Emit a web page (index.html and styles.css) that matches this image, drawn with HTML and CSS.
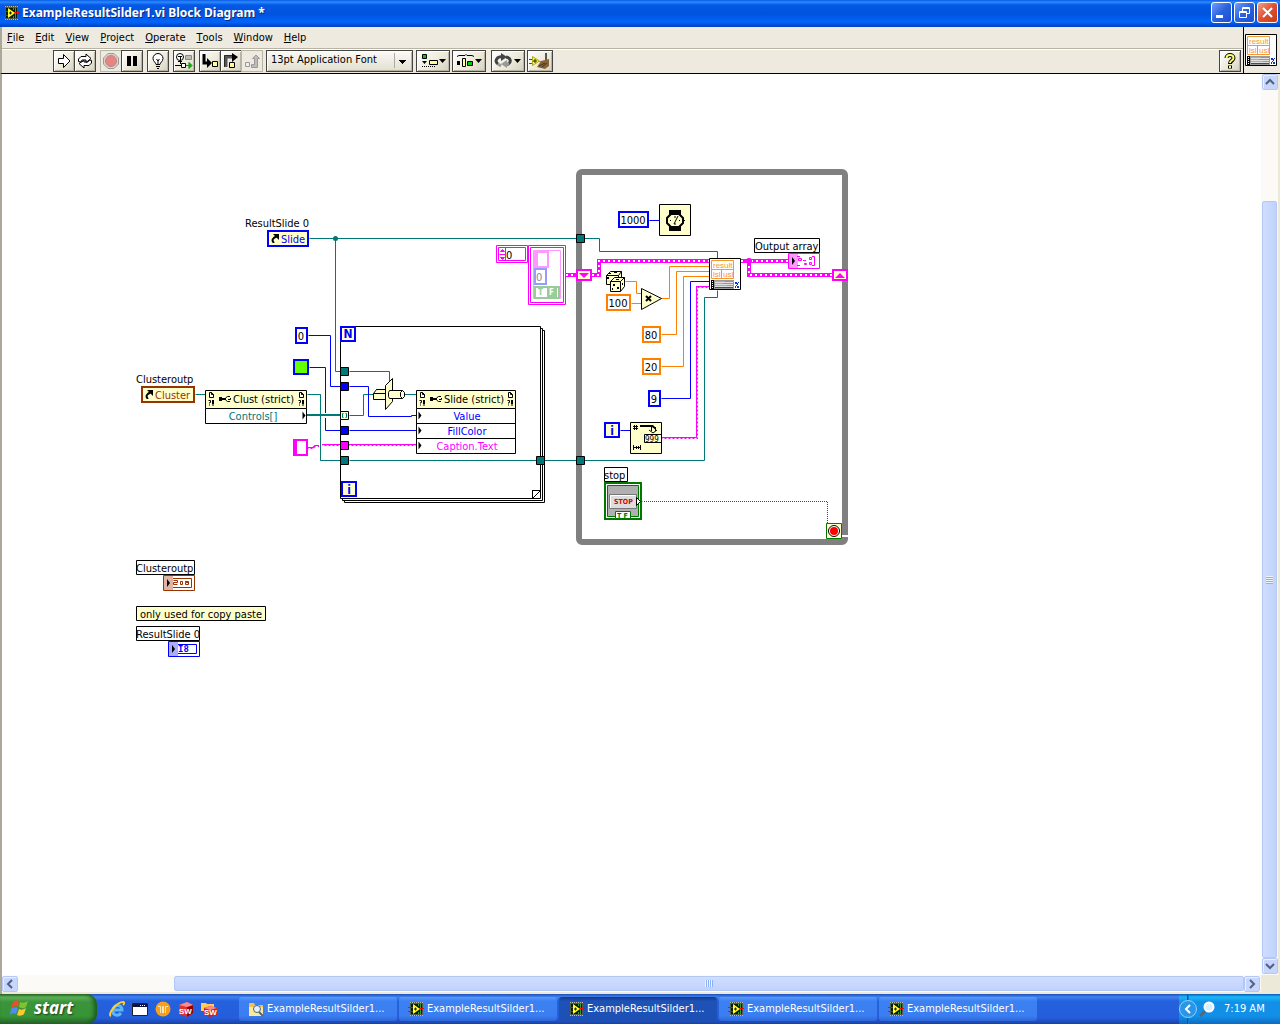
FILE: index.html
```
<!DOCTYPE html>
<html lang="en">
<head>
	<meta charset="utf-8">
	<title>ExampleResultSilder1.vi Block Diagram *</title>
	<link rel="stylesheet" href="styles.css">
</head>
<body>
	<!-- shared icons -->
	<svg class="defs" width="0" height="0" aria-hidden="true">
		<symbol id="lv" viewBox="0 0 16 16">
			<path fill="#555a50" d="M2 1h13v14H2z"/>
			<path fill="#0a1e05" d="M3 3h11v10H3z"/>
			<path stroke="#b8b8a8" stroke-dasharray="1 1" d="M2 1.500h13M2 14.500h13"/>
			<path fill="none" stroke="#2fa02f" d="M12.500 3v10M10.500 3v2M10.500 11v2"/>
			<path stroke="#f00" d="M0 6.500h5M11 7.500h5"/>
			<path stroke="#1440ff" d="M0 10.500h5"/>
			<path fill="#ff2" d="M5 3l7 5-7 5z"/>
			<path stroke="#222" d="M6 8h3M7.500 6.500v3"/>
		</symbol>
		<symbol id="left" viewBox="0 0 10 10"><path fill="none" stroke="#4d6185" stroke-width="2" d="M7 1L3 5l4 4"/></symbol>
		<symbol id="right" viewBox="0 0 10 10"><path fill="none" stroke="#4d6185" stroke-width="2" d="M3 1l4 4-4 4"/></symbol>
		<symbol id="up" viewBox="0 0 10 10"><path fill="none" stroke="#4d6185" stroke-width="2" d="M1 7l4-4 4 4"/></symbol>
		<symbol id="down" viewBox="0 0 10 10"><path fill="none" stroke="#4d6185" stroke-width="2" d="M1 3l4 4 4-4"/></symbol>
		<symbol id="doc" viewBox="0 0 7 15">
			<path fill="#fff" stroke="#000" d="M1.500 1.500h2l2 2v3h-4zM3.500 1.500v2h2"/>
			<path fill="none" stroke="#000" d="M.5 9.500h2v2h-1v1M1 14h1M4.500 9v4M4 14h2M5.500 9v4"/>
		</symbol>
		<symbol id="key" viewBox="0 0 12 8">
			<path d="M0 2h3v1h4v2H3v1H0z"/>
			<path fill="none" stroke="#000" d="M11 1.500H8.500L6.500 3v2l2 1.500H11M9 4.500h2.500V3"/>
		</symbol>
		<symbol id="ref" viewBox="0 0 8 9">
			<path fill="none" stroke="#000" stroke-width="2" d="M3 9C0 6 2 4 6 2"/>
			<path d="M2 0h6v6z"/>
		</symbol>
	</svg>

	<header class="titlebar">
		<svg width="16" height="16"><use href="#lv"/></svg>
		<h1>ExampleResultSilder1.vi Block Diagram *</h1>
		<button class="cap" aria-label="Minimize"><svg width="19" height="19"><path stroke="#fff" stroke-width="3" d="M4 13.500h7"/></svg></button>
		<button class="cap" aria-label="Restore"><svg width="19" height="19"><path fill="none" stroke="#fff" d="M7.500 8V4.500h7v6H12M4.500 8.500h7v6h-7zM7 5.500h8M4 9.500h8"/></svg></button>
		<button class="cap close" aria-label="Close"><svg width="19" height="19"><path stroke="#fff" stroke-width="2" d="M5 5l9 9M14 5l-9 9"/></svg></button>
	</header>

	<div class="top">
		<div class="bars">
			<nav class="menu">
				<button><u>F</u>ile</button>
				<button><u>E</u>dit</button>
				<button><u>V</u>iew</button>
				<button><u>P</u>roject</button>
				<button><u>O</u>perate</button>
				<button><u>T</u>ools</button>
				<button><u>W</u>indow</button>
				<button><u>H</u>elp</button>
			</nav>
			<div class="toolbar">
				<div class="group">
					<button class="tool" aria-label="Run"><svg width="18" height="18"><path fill="#fff" stroke="#000" d="M3.500 6.500h5v-4L15 9l-6.500 6.500v-4h-5z"/></svg></button>
					<button class="tool" aria-label="Run continuously"><svg width="18" height="18"><path fill="#fff" stroke="#000" d="M2.500 9.500V7L5 4.500h5V2l5 4.500-5 4V8H6l-1 2zM15.500 8.500V11L13 13.500H8V16l-5-4.500 5-3V10h4l1-2z"/></svg></button>
				</div>
				<div class="group">
					<button class="tool off" aria-label="Abort" disabled><svg width="18" height="18"><path fill="#d8d4cc" stroke="#999" d="M6 1.500h6L16.500 6v6L12 16.500H6L1.500 12V6z"/><circle cx="9" cy="9" r="5.500" fill="#e88580" stroke="#b88"/></svg></button>
					<button class="tool" aria-label="Pause"><svg width="18" height="18"><path d="M4 4h4v10H4zM10 4h4v10h-4z"/></svg></button>
				</div>
				<div class="group">
					<button class="tool" aria-label="Highlight execution"><svg width="18" height="18"><path fill="#fff" stroke="#000" d="M7 12.500c0-2-3-3-3-6a5 5 0 0 1 10 0c0 3-3 4-3 6zM7 14.500h4M8 16.500h2M7.500 7l1.500 2 1.500-2M9 9v3"/></svg></button>
				</div>
				<div class="group">
					<button class="tool" aria-label="Retain wire values"><svg width="18" height="18"><circle cx="5" cy="5" r="3.500" fill="#fff" stroke="#000"/><path fill="none" stroke="#000" d="M3 4.500h4M5.500 5v7M3 9.500h4M0 13.500h6"/><path fill="#bbb" stroke="#888" d="M10.500 3.500h6v4h-6z"/><path fill="#fff" stroke="#000" d="M6.500 11.500h4v4h-4z"/><path fill="#0b0" stroke="#090" d="M11 13.500h3v-3l3 3-3 3v-3"/></svg></button>
				</div>
				<div class="group">
					<button class="tool" aria-label="Step into"><svg width="18" height="18"><path fill="none" stroke="#000" stroke-width="3" d="M3 2v9h5"/><path d="M6 6l5 5-5 5z"/><path fill="#ff9" stroke="#000" d="M11.500 9.500h5v5h-5z"/></svg></button>
					<button class="tool" aria-label="Step over"><svg width="18" height="18"><path fill="none" stroke="#000" d="M2.500 15V3.500h8"/><path fill="none" stroke="#555" stroke-width="3" d="M4 15V5h8"/><path d="M10 1l6 4-6 5z"/><path fill="#ff9" stroke="#000" d="M7.500 10.500h5v5h-5z"/></svg></button>
					<button class="tool off" aria-label="Step out" disabled><svg width="18" height="18"><path fill="#bbb" stroke="#999" d="M8.500 12.500h3v-6h-2L13 3l3.500 3.500h-2v9h-6z"/><path fill="#eee" stroke="#999" d="M2.500 10.500h4v4h-4z"/></svg></button>
				</div>
				<select class="font" aria-label="Font"><option>13pt Application Font</option></select>
				<button class="tool wide" aria-label="Align objects"><svg width="30" height="18"><path fill="#0c0" stroke="#000" d="M4.500 2.500h4v4h-4z"/><path fill="#ff9" stroke="#000" d="M11.500 8.500h8v4h-8z"/><path stroke="#000" stroke-dasharray="1 1" d="M4 14.500h14"/><path d="M4 9h5l-2.500 3zM21 7h7l-3.500 4z"/></svg></button>
				<button class="tool wide" aria-label="Distribute objects"><svg width="30" height="18"><path fill="none" stroke="#000" d="M3 4.500l2-1h6l1-1 1 1h5l2 1"/><path d="M3 9h3v4H3zM21 7h7l-3.500 4z"/><path fill="#ff9" stroke="#000" d="M8.500 6.500h3v8h-3z"/><path fill="#0c0" stroke="#000" d="M13.500 9.500h5v4h-5z"/></svg></button>
				<button class="tool wide apart" aria-label="Reorder"><svg width="30" height="18"><path fill="none" stroke="#444" stroke-width="3" d="M5 12C1 9 4 4 10 5M13 5c5 1 6 5 1 8"/><path fill="#444" d="M8 1l6 4-6 4z"/><path fill="#999" d="M14 8v8l-6-4z"/><path stroke="#999" stroke-width="3" d="M12 12h4M5 12l3 2"/><path d="M21 7h7l-3.500 4z"/></svg></button>
				<button class="tool mid" aria-label="Clean up diagram"><svg width="22" height="18"><path stroke="#f00" d="M0 7.500h5"/><path stroke="#15f" d="M0 11.500h5"/><path stroke="#f70" d="M9 9.500h6"/><path fill="#ff2" stroke="#aa2" d="M3.500 4.500l7 4.500-7 4.500z"/><path stroke="#222" d="M4 9h4M6 7v4"/><path fill="#555" d="M16 1h2v7h-2z"/><path fill="#8a6237" d="M12 9l8-2v7l-4 3-8-2z"/><path stroke="#432" d="M10 14l6-3M13 15l5-4"/></svg></button>
				<button class="tool help" aria-label="Context help"><svg width="18" height="18"><path fill="none" stroke="#000" stroke-width="4" d="M5.500 6c0-4 7-4 7 0 0 3-3.500 2-3.500 6M9 13.500v3"/><path fill="none" stroke="#ff6" stroke-width="2" d="M5.500 6c0-4 7-4 7 0 0 3-3.500 2-3.500 5M9 14v2"/></svg></button>
			</div>
		</div>
		<div class="viicon">
			<svg width="32" height="32">
				<g id="vi">
					<path fill="#fff" stroke="#000" d="M.5.5h31v31H.5z"/>
					<path fill="none" stroke="#f7962e" d="M2.500 2.500h22v9h-22zM2.500 11.500h22v9h-22zM12.500 11.500v9"/>
					<text class="tiny" x="4" y="10">result</text>
					<text class="tiny" x="4" y="19">lsl</text>
					<text class="tiny" x="14" y="19">usl</text>
					<path fill="#999" d="M2 22h23v9H2z"/>
					<path fill="#ddd" d="M6 24h18v1H6zM6 26h18v1H6zM6 28h18v1H6z"/>
					<path fill="#5f0" d="M6 23h10v1H6zM6 25h8v1H6zM6 27h12v1H6z"/>
					<path fill="#f00" d="M6 29h18v1H6z"/>
					<path d="M2 22h3v9H2z"/>
					<path fill="#fff" d="M3 23h1v1H3zM3 25h1v1H3zM3 27h1v1H3zM3 29h1v1H3z"/>
					<path fill="#13c" d="M26 24h2v2h-2zM28 28h2v2h-2zM29 24h1v1h-1zM28 25h1v2h-1zM27 27h1v1h-1zM26 28h1v2h-1z"/>
				</g>
			</svg>
		</div>
	</div>

	<main class="pane">
		<div class="canvas">
			<svg class="diagram" width="860" height="600" viewBox="2 74 860 600">
				<!-- while loop -->
				<rect x="579" y="172" width="266" height="370" rx="3" fill="none" stroke="#808080" stroke-width="6"/>
				<path fill="#fff" d="M842 535h6v2h-6z"/>

				<!-- for loop -->
				<g transform="translate(.5 .5)" fill="#fff" stroke="#000">
					<path d="M344 330h200v172H344z"/>
					<path d="M342 328h200v172H342z"/>
					<path d="M340 326h200v172H340z"/>
					<path d="M532 498v-8h8zM532 490h8"/>
				</g>
				<path fill="#fff" d="M533 491h7v7h-7z"/>
				<path fill="none" stroke="#000" d="M532.500 498v-7.500h8l-8 8"/>

				<!-- wires -->
				<g class="wires" transform="translate(.5 .5)">
					<path class="teal" d="M309 238h270M335 238v133h6M584 238h15v13h118v7"/>
					<path class="teal" d="M195 394h10M307 394h13v66h21M349 371h40v10M349 415h14v-21h10M404 394h12M349 460h190M544 460h34M584 460h120V297h13v-7"/>
					<path class="blue" d="M308 335h22v51h11M309 367h16v63h16M349 386h19v30h43v-1h5M349 430h67"/>
					<path class="blue" d="M649 220h10M661 398h29V281h19M620 430h10"/>
					<path class="orange" d="M625 281h11v12h5M631 303h10M661 298h8v-32h40M661 334h15v-63h33M661 366h22v-90h26"/>
					<path class="dotted" d="M642 501h185v22"/>
				</g>
				<path fill="#fff" d="M317 413h7v5h-7zM324 413h3v5h-3z"/>
				<path class="thick" d="M307 415h34"/>
				<path class="teal" d="M320 394v66" transform="translate(.5 .5)"/>
				<path class="str" d="M308 448h5l2-2h4M322 445h19M349 445h67M662 438h35V287h12"/>
				<path class="strgap" transform="translate(.5 .5)" d="M308 448h5l2-2h4M322 445h19M349 445h67M662 438h35V287h12"/>
				<path class="cluster" d="M566 275h10M592 275h7v-14h110M741 261h47M749 261v14h83"/>
				<path class="clusterin" d="M566 275h10M592 275h7v-14h110M741 261h47M749 261v14h83"/>
				<circle cx="335.500" cy="238.500" r="2.500" fill="#007878"/>
				<circle cx="749" cy="261" r="3" fill="#f0f"/>

				<!-- tunnels -->
				<g stroke="#000" fill="#007878" transform="translate(.5 .5)">
					<path d="M576 234h8v8h-8zM576 456h8v8h-8zM536 456h8v8h-8zM340 367h8v8h-8zM340 456h8v8h-8z"/>
					<path fill="#00f" d="M340 382h8v8h-8zM340 426h8v8h-8z"/>
					<path fill="#f0f" d="M340 441h8v8h-8z"/>
					<path fill="#ffc" d="M340 411h8v8h-8z"/>
					<path fill="none" stroke="#007878" d="M343 413h-1v4h1M345 413h1v4h-1"/>
				</g>
				<g fill="#ffc" stroke="#f0f" stroke-width="2">
					<path d="M577 270h14v10h-14zM833 270h14v10h-14z"/>
					<path fill="#f0f" stroke="none" d="M579 273h10l-5 5zM835 278h10l-5-5z"/>
				</g>

				<!-- loop terminals -->
				<g fill="#ffc" stroke="#00f" stroke-width="2">
					<path d="M341 327h14v14h-14zM342 482h14v14h-14zM605 423h14v14h-14z"/>
				</g>
				<g class="term">
					<text x="348" y="338">N</text>
					<text x="349" y="494">i</text>
					<text x="612" y="435">i</text>
				</g>
				<path fill="#ffc" stroke="#007800" d="M826.500 523.500h15v15h-15z"/>
				<circle cx="834" cy="531" r="5.500" fill="#fff" stroke="#000"/>
				<circle cx="834" cy="531" r="4" fill="#f00"/>

				<!-- constants -->
				<g fill="#fff" stroke="#00f" stroke-width="2">
					<path d="M296 328h11v15h-11zM619 212h29v15h-29zM649 391h11v15h-11z"/>
					<path fill="#6f0" d="M294 360h14v14h-14z"/>
					<path stroke="#ff8000" d="M607 295h23v15h-23zM643 327h17v15h-17zM643 359h17v15h-17z"/>
				</g>
				<path fill="#f0f" d="M293 439h15v17h-15z"/>
				<path fill="#fff" d="M297 441h9v13h-9z"/>
				<g class="mid-text">
					<text x="301" y="340">0</text>
					<text x="633" y="224">1000</text>
					<text x="618" y="307">100</text>
					<text x="651" y="339">80</text>
					<text x="651" y="371">20</text>
					<text x="654" y="403">9</text>
				</g>

				<!-- array of clusters constant -->
				<g fill="#fff" stroke="#f0f" transform="translate(.5 .5)">
					<path d="M496 245h31v17h-31zM528 245h37v59h-37z"/>
					<path d="M498 247h27v13h-27zM530 247h33v55h-33z"/>
					<path d="M505 247v13M499 254h6"/>
					<path fill="#f0f" d="M500 251l2-2 2 2zM500 257l2 2 2-2z"/>
					<path stroke="#ff99ff" d="M533 250h27v48h-27z"/>
				</g>
				<path fill="#ff99ff" d="M534 251h15v17h-15z"/>
				<path fill="#fff" d="M538 253h9v13h-9z"/>
				<path fill="#fff" stroke="#9999ff" stroke-width="2" d="M535 269h11v15h-11z"/>
				<path fill="#fff" stroke="#99cc99" stroke-width="2" d="M535 287h24v11h-24z"/>
				<path fill="#99cc99" d="M547 288h10v9h-10z"/>
				<text x="506" y="259">0</text>
				<text class="grey" x="536" y="281">0</text>
				<text class="bit pale" x="538" y="295">T</text>
				<text class="bit white" x="549" y="295">F</text>

				<!-- slide and cluster references -->
				<path fill="#ffc" stroke="#00f" stroke-width="2" d="M268 231h40v15h-40z"/>
				<path fill="#ffc" stroke="#993300" stroke-width="2" d="M142 387h52v15h-52z"/>
				<use href="#ref" x="271" y="234" width="8" height="9"/>
				<use href="#ref" x="145" y="390" width="8" height="9"/>
				<text x="245" y="227">ResultSlide 0</text>
				<text class="t-blue" x="281" y="243">Slide</text>
				<text x="136" y="383">Clusteroutp</text>
				<text class="t-brown" x="155" y="399">Cluster</text>

				<!-- property nodes -->
				<g fill="#fff" stroke="#000" transform="translate(.5 .5)">
					<path d="M205 408h101v15H205zM416 408h99v15h-99zM416 423h99v15h-99zM416 438h99v15h-99z"/>
					<path fill="#ffc" d="M205 390h101v18H205zM416 390h99v18h-99z"/>
					<path fill="#000" stroke="none" d="M302 411l3 4-3 4zM418 411l3 4-3 4zM418 426l3 4-3 4zM418 441l3 4-3 4z"/>
				</g>
				<use href="#doc" x="208" y="391" width="7" height="15"/>
				<use href="#doc" x="298" y="391" width="7" height="15"/>
				<use href="#doc" x="419" y="391" width="7" height="15"/>
				<use href="#doc" x="507" y="391" width="7" height="15"/>
				<use href="#key" x="219" y="395" width="12" height="8"/>
				<use href="#key" x="430" y="395" width="12" height="8"/>
				<text x="233" y="403">Clust (strict)</text>
				<text x="444" y="403">Slide (strict)</text>
				<g class="mid-text">
					<text class="t-teal" x="253" y="420">Controls[]</text>
					<text class="t-blue" x="467" y="420">Value</text>
					<text class="t-blue" x="467" y="435">FillColor</text>
					<text class="t-pink" x="467" y="450">Caption.Text</text>
				</g>

				<!-- to more specific class -->
				<g fill="#ffc" stroke="#000" transform="translate(.5 .5)">
					<path d="M373 393l3-4h9v10h-12zM373 393h12M376 389h8"/>
					<path d="M385 385l7-7v23l-7 8z"/>
					<path d="M389 390h13l2 2v4l-2 2h-13l-1-2v-4zM402 390l-2 2v4l2 2"/>
				</g>

				<!-- wait, dice, multiply, number to string -->
				<path fill="#ffc" stroke="#000" d="M659.500 204.500h31v31h-31z"/>
				<path d="M669 210h12v5h-12zM669 226h12v5h-12z"/>
				<path fill="#ffc" stroke="#000" stroke-width="2" d="M671 214h8l4 4v5l-4 4h-8l-4-4v-5z"/>
				<path fill="none" stroke="#000" d="M674 224l4-8M675 216v2M675 223v2M670 220.500h1M679 220.500h1M683 220.500h2"/>
				<g fill="#ffc" stroke="#000" transform="translate(.5 .5)">
					<path d="M606 275l4-4h11v9l-3 4h-12zM606 275h12v9M618 275l3-4"/>
					<path d="M610 281l4-4h10v9l-4 5h-10zM610 281h10v10M620 281l4-4"/>
					<path d="M641 288v21l20-11z"/>
				</g>
				<path d="M609 273h2v1h-2zM614 272h3v1h-3zM607 277h2v2h-2zM613 284h2v2h-2zM617 287h2v2h-2zM616 279h3v1h-3zM622 283h1v2h-1zM612 288h1v2h-1z"/>
				<path stroke="#000" stroke-width="2" d="M646 296l5 5M651 296l-5 5"/>
				<path fill="#ffc" stroke="#000" d="M630.500 422.500h31v31h-31zM644.500 434.500h17v8h-17z"/>
				<path fill="none" stroke="#000" d="M634.500 425v5M636.500 425v5M633 426.500h5M633 428.500h5M633.500 445v5M640.500 445v5M634 447.500h6M636.500 446v3M638.500 446v3M649 430l4 3 4-3M651.500 427v4M655.500 427v4"/>
				<path d="M640 425h13l3 3v2l-4-3h-12z"/>
				<text class="bit thin" x="645" y="442">999</text>
				<use href="#vi" x="709" y="258"/>

				<!-- terminals -->
				<g fill="#fff" stroke="#000" transform="translate(.5 .5)">
					<path d="M754 238h65v14h-65zM604 467h23v14h-23zM136 560h58v14h-58zM136 626h63v14h-63z"/>
					<path fill="#ffc" d="M136 606h129v14H136z"/>
					<path stroke="#f0f" d="M788 253h31v15h-31z"/>
					<path stroke="#993300" d="M163 575h31v15h-31zM166 578h25v9h-25z"/>
					<path stroke="#00f" d="M168 641h31v15h-31zM171 644h25v9h-25z"/>
				</g>
				<path fill="#f9f" d="M789 254h9v14h-9z"/>
				<path fill="#e0b4a4" d="M164 576h9v14h-9z"/>
				<path fill="#aaf" d="M169 642h9v14h-9z"/>
				<path d="M792 257l3 4-3 4zM167 579l3 4-3 4zM172 645l3 4-3 4z"/>
				<path fill="none" stroke="#f0f" d="M797 256.500h3M797 265.500h3M812 256.500h2.500v9H812M798.500 258.500h3v2h-3zM803 260.500h3M804.500 263.500h2v1h-2zM809.500 257.500h2v2h-2zM809.500 262.500h2v2h-2z"/>
				<path fill="none" stroke="#993300" d="M173.500 580.500h4v2h-4v2h4M180.500 581.500h2v3h-2zM185 581.500h3.500v3h-3v-2h3"/>
				<text x="755" y="250">Output array</text>
				<text x="604" y="479">stop</text>
				<text x="136" y="572">Clusteroutp</text>
				<text x="140" y="618">only used for copy paste</text>
				<text x="136" y="638">ResultSlide 0</text>
				<text class="bit i8" x="178" y="652">I8</text>

				<path fill="#fff" stroke="#007800" stroke-width="2" d="M605 483h36v36h-36z"/>
				<path fill="#b0b0b0" stroke="#007800" d="M607.500 485.500h31v31h-31z"/>
				<path fill="#ddd" stroke="#777" d="M609.500 494.500h27v14h-27z"/>
				<path fill="none" stroke="#fff" d="M610.500 508v-12.500h25"/>
				<text class="bit stop" x="614" y="504">STOP</text>
				<path fill="#fff" stroke="#000" d="M636.500 497.500l4 4-4 4z"/>
				<path fill="#fff" stroke="#007800" d="M615.500 511.500h15v7h-15z"/>
				<text class="bit tf" x="617" y="518">T F</text>
			</svg>
		</div>
		<div class="scroll vert">
			<button aria-label="Scroll up"><svg width="10" height="10"><use href="#up"/></svg></button>
			<div class="track"><div class="thumb"><i></i></div></div>
			<button aria-label="Scroll down"><svg width="10" height="10"><use href="#down"/></svg></button>
		</div>
		<div class="scroll horz">
			<button aria-label="Scroll left"><svg width="10" height="10"><use href="#left"/></svg></button>
			<div class="track"><div class="thumb"><i></i></div></div>
			<button aria-label="Scroll right"><svg width="10" height="10"><use href="#right"/></svg></button>
		</div>
	</main>

	<footer class="taskbar">
		<button class="start">
			<svg width="20" height="20"><path fill="#e8502a" d="M3 4c2-2 4-2 6-1L8 9C6 8 4 8 1 10z"/><path fill="#7cc52e" d="M10 4c2 1 5 1 8-1l-2 6c-3 2-5 1-7 0z"/><path fill="#4f8df5" d="M1 11c2-2 5-2 7-1l-2 6c-2-1-4-1-6 1z"/><path fill="#fbc82d" d="M9 11c2 1 4 1 7-1l-2 6c-2 2-5 2-7 1z"/></svg>
			start
		</button>
		<div class="quick">
			<a href="#" aria-label="Internet Explorer"><svg width="16" height="16"><path fill="none" stroke="#5bb8f5" stroke-width="3" d="M4 9h9c0-6-8-6-9 0-1 5 5 7 8 3"/><path fill="none" stroke="#fc3" stroke-width="2" d="M2 15C-2 13 8 1 14 1c2 0 1 2 0 3"/></svg></a>
			<a href="#" aria-label="Show desktop"><svg width="16" height="16"><path fill="#fff" stroke="#222" d="M.5 2.500h15v12H.5z"/><path fill="#114" d="M1 3h14v3H1z"/><path fill="#fff" d="M8 4h1v1H8zM10 4h1v1h-1zM12 4h1v1h-1z"/></svg></a>
			<a href="#" aria-label="Launcher"><svg width="16" height="16"><circle cx="8" cy="8" r="7.500" fill="#f9a01b"/><path fill="none" stroke="#fde6b8" d="M3 5.500h2.500V12M7.500 12V5.500h1V12M13 5.500h-2.500V12"/></svg></a>
			<a href="#" aria-label="SolidWorks"><svg width="16" height="16"><path fill="#d33" d="M1 4l8-3 6 3v8l-6 4-8-3z"/><path fill="#900" d="M9 6l6-2v8l-6 4z"/><path fill="#f88" d="M1 4l8-3 6 3-6 2z"/><text class="sw" x="1" y="13">SW</text></svg></a>
			<a href="#" aria-label="SolidWorks Explorer"><svg width="16" height="16"><path fill="#fc5" d="M0 2h5l1 1h7v7H0z"/><path fill="#c22" d="M3 7l6-2 7 2v7l-7 2-6-2z"/><path fill="#f88" d="M3 7l6-2 7 2-7 2z"/><text class="sw" x="3" y="14">SW</text></svg></a>
		</div>
		<div class="tasks">
			<button><svg width="16" height="16"><path fill="#f3c14b" d="M1 2h5l1 2h8v11H1z"/><path fill="#ffe79a" d="M1 6h14v9H1z"/><circle cx="9" cy="8" r="3.500" fill="#dff3ff" stroke="#567"/><path stroke="#567" stroke-width="2" d="M11 11l4 4"/></svg><span>ExampleResultSilder1...</span></button>
			<button><svg width="16" height="16"><use href="#lv"/></svg><span>ExampleResultSilder1...</span></button>
			<button class="active"><svg width="16" height="16"><use href="#lv"/></svg><span>ExampleResultSilder1...</span></button>
			<button><svg width="16" height="16"><use href="#lv"/></svg><span>ExampleResultSilder1...</span></button>
			<button><svg width="16" height="16"><use href="#lv"/></svg><span>ExampleResultSilder1...</span></button>
		</div>
		<div class="tray">
			<button aria-label="Show hidden icons"><svg width="18" height="18"><circle cx="9" cy="9" r="8.500" fill="#2a96ea" stroke="#8fd0fa"/><path fill="none" stroke="#fff" stroke-width="2" d="M11 5L7 9l4 4"/></svg></button>
			<svg width="16" height="16"><path stroke="#567" stroke-width="3" d="M1 15l5-5"/><circle cx="10" cy="6" r="4.500" fill="#d8efff" stroke="#fff" stroke-width="2"/></svg>
			<time>7:19 AM</time>
		</div>
	</footer>
</body>
</html>
```
FILE: styles.css
```
*{margin:0;padding:0;box-sizing:border-box;}
body{height:100vh;display:flex;flex-direction:column;overflow:hidden;background:#ece9d8;font:11px/14px "DejaVu Sans Condensed","Liberation Sans",sans-serif;color:#000;}
button,select{font:inherit;color:inherit;border:0;background:none;}
button{display:flex;align-items:center;justify-content:center;}
svg{display:block;flex:none;}
.defs{position:absolute;}

/* title bar */
.titlebar{height:27px;flex:none;display:flex;align-items:center;gap:2px;padding:0 2px 2px 3px;background:linear-gradient(#0a5ae6,#2a8bff 2px,#0458e4 5px,#0053dd 14px,#0065fb 22px,#0044c8 26px);color:#fff;}
.titlebar h1{flex:1;padding-left:1px;font:bold 12px/20px "Noto Sans","Open Sans",sans-serif;text-shadow:1px 1px #0a2a80;white-space:nowrap;}
.cap{width:21px;height:21px;border:1px solid #fff;border-radius:3px;background:linear-gradient(135deg,#6f9dff,#2b61dd 50%,#1c4fd0);}
.close{background:linear-gradient(135deg,#f0a088,#e05030 50%,#c83c18);}

/* menu and toolbar */
.top{flex:none;display:flex;background:#eeeadf;border-left:2px solid #aca899;border-bottom:1px solid #000;}
.bars{flex:1;}
.menu{display:flex;height:22px;gap:11px;padding:0 5px;border-bottom:1px solid #b8b4a4;align-items:center;}
.toolbar{display:flex;height:24px;align-items:center;gap:3px;padding:0 2px 1px 51px;border-top:1px solid #fff;}
.group{display:flex;margin-right:1px;}
.group:nth-child(5){margin-right:0;}
.tool{width:22px;height:22px;border:1px solid #444;box-shadow:inset 1px 1px #fff,inset -1px -1px #b9b5a6;background:linear-gradient(135deg,#fff,#ece9d8 60%,#d4d0c0);}
.tool + .tool{margin-left:-1px;}
.toolbar > .tool{margin-left:0;}
.off{border-color:#b9b5a6;box-shadow:none;background:#eeeadf;}
.font{appearance:none;width:147px;height:22px;padding:0 4px 2px;border:1px solid #444;box-shadow:inset 1px 1px #fff,inset -1px -1px #b9b5a6;
	background:linear-gradient(#000,#000) 132px 9px/7px 1px no-repeat,linear-gradient(#000,#000) 133px 10px/5px 1px no-repeat,linear-gradient(#000,#000) 134px 11px/3px 1px no-repeat,linear-gradient(#000,#000) 135px 12px/1px 1px no-repeat,linear-gradient(#aaa,#aaa) 127px 2px/1px 15px no-repeat,linear-gradient(#fbfaf5,#e2dfd0);}
.wide{width:34px;}
.toolbar > .wide + .apart{margin-left:2px;}
.toolbar > .wide + .wide{margin-left:-1px;}
.toolbar > .wide + .apart{margin-left:2px;}
.apart + .mid{margin-left:-1px;}
.mid{width:26px;}
.toolbar > .help{margin-left:auto;}
.viicon{width:37px;border-left:1px solid #000;padding:7px 0 0 1px;}

/* block diagram pane */
.pane{flex:1;min-height:0;display:grid;grid-template:1fr 17px/1fr 17px;padding:0 2px 2px 0;border-left:2px solid #aca899;}
.canvas{background:#fff;overflow:hidden;min-width:0;}
.diagram text{font-size:11px;}
.diagram .mid-text{text-anchor:middle;}
.tiny,.diagram .tiny{font:8px "Liberation Sans",sans-serif;fill:#f7962e;}
.wires{fill:none;stroke-width:1;}
.teal{stroke:#007878;fill:none;}
.blue{stroke:#00f;}
.orange{stroke:#ff8000;}
.dotted{stroke:#007800;stroke-dasharray:1 1;stroke-dashoffset:.5;}
.thick{stroke:#007878;stroke-width:2;}
.str{fill:none;stroke:#f0f;stroke-width:2;}
.strgap{fill:none;stroke:#fff;stroke-width:1;stroke-dasharray:2 2;}
.cluster{fill:none;stroke:#f0f;stroke-width:4;}
.clusterin{fill:none;stroke:#fff;stroke-width:2;stroke-dasharray:2 3;}
.t-blue{fill:#00f;}
.t-teal{fill:#007878;}
.t-brown{fill:#993300;}
.t-pink{fill:#f0f;}
.grey{fill:#888;}
.diagram .term text{font-size:12px;font-weight:bold;fill:#00f;text-anchor:middle;}
.diagram .bit{font:bold 8px "DejaVu Sans Condensed",sans-serif;}
.diagram .thin{font-weight:normal;}
.pale{fill:#99cc99;}
.white{fill:#fff;}
.diagram .stop{font-size:7px;fill:#e00000;}
.diagram .tf{font-size:7px;fill:#007800;}
.diagram .i8{font:bold 9px "DejaVu Sans Mono",monospace;fill:#00f;}

/* scroll bars */
.scroll{display:flex;background:#fbfaf6;padding:1px;}
.scroll button{flex:none;width:16px;height:16px;border:1px solid #b4c8f6;border-radius:2px;background:#c8d6fb;box-shadow:inset 1px 1px #e6eeff;}
.vert{flex-direction:column;padding-top:0;}
.track{flex:1;display:grid;}
.thumb{display:grid;place-items:center;border:1px solid #b4c8f6;border-radius:2px;background:linear-gradient(90deg,#cfddff,#c1d2fb);}
.vert .track{grid-template-rows:128fr 872fr;}
.vert .thumb{grid-row:2;}
.vert .thumb i{width:7px;height:8px;background:repeating-linear-gradient(#eef4fe 0 1px,#8cb0f8 1px 2px);}
.horz{padding-left:0;}
.horz .track{grid-template-columns:127fr 873fr;}
.horz .thumb{grid-column:2;background:linear-gradient(#cfddff,#c1d2fb);}
.horz .thumb i{width:8px;height:7px;background:repeating-linear-gradient(90deg,#eef4fe 0 1px,#8cb0f8 1px 2px);}

/* taskbar */
.taskbar{flex:none;height:30px;display:flex;color:#fff;background:linear-gradient(#1f4fb8,#3f83f0 3px,#2560dd 7px,#245edb 24px,#1941a5);}
.start{width:97px;gap:4px;justify-content:flex-start;padding:0 0 2px 10px;border-radius:0 10px 10px 0;background:linear-gradient(#2f6f2c,#5eb45a 3px,#3c943a 8px,#379437 22px,#27672a);box-shadow:inset -3px 0 4px #1e5a20;font:italic bold 17px/24px "Noto Sans",sans-serif;text-shadow:1px 1px 2px #1c3d1c;}
.quick{display:flex;align-items:center;gap:7px;padding-left:12px;}
.quick a{display:block;}
.sw{font:bold 8px "Liberation Sans",sans-serif;fill:#fff;}
.tasks{flex:1;min-width:0;display:flex;align-items:center;gap:2px;padding-left:22px;}
.tasks button{flex:0 1 158px;min-width:0;height:24px;gap:3px;justify-content:flex-start;padding-left:9px;border-radius:3px;background:linear-gradient(#5a9af8,#3c81f3 4px,#3a7df0 19px,#2c66d8);white-space:nowrap;}
.tasks .active{background:linear-gradient(#15398c,#1e52b7 4px,#1d50b5);}
.tray{width:101px;display:flex;align-items:center;gap:2px;background:linear-gradient(90deg,transparent 8px,#0a3f9a 8px,#1290e8 10px,transparent 10px),linear-gradient(#0c59b9,#19b9f5 3px,#1290e8 8px,#1290e8 22px,#0d6ac0);}
.tray time{padding-left:7px;white-space:nowrap;}
```
